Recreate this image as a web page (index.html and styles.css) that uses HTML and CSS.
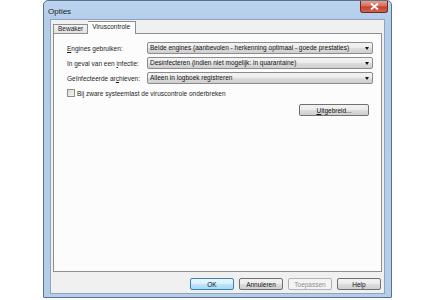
FILE: index.html
```html
<!DOCTYPE html>
<html>
<head>
<meta charset="utf-8">
<link rel="stylesheet" href="styles.css">
</head>
<body>
<div class="window">
  <div class="titlebar">
    <span class="title">Opties</span>
    <div class="close"><svg width="9" height="7" viewBox="0 0 9 7"><path d="M1 0.5 L8 6.5 M8 0.5 L1 6.5" stroke="#fff" stroke-width="1.8"/></svg></div>
  </div>
  <div class="client">
    <div class="tabs">
      <div class="tab">Bewaker</div>
      <div class="tab active">Viruscontrole</div>
    </div>
    <div class="panel">
      <div class="row">
        <span class="label"><u>E</u>ngines gebruiken:</span>
        <div class="select">Beide engines (aanbevolen - herkenning optimaal - goede prestaties)<span class="arrow"></span></div>
      </div>
      <div class="row">
        <span class="label">In geval van een <u>i</u>nfectie:</span>
        <div class="select">Desinfecteren (indien niet mogelijk: in quarantaine)<span class="arrow"></span></div>
      </div>
      <div class="row">
        <span class="label">Geïnfecteerde ar<u>c</u>hieven:</span>
        <div class="select">Alleen in logboek registreren<span class="arrow"></span></div>
      </div>
      <label class="check"><span class="box"></span><span class="check-text">Bi<u>j</u> zware systeemlast de viruscontrole onderbreken</span></label>
      <div class="adv-row"><div class="btn"><span><u>U</u>itgebreid...</span></div></div>
    </div>
    <div class="buttons">
      <div class="btn default">OK</div>
      <div class="btn">Annuleren</div>
      <div class="btn disabled">Toepassen</div>
      <div class="btn">Help</div>
    </div>
  </div>
</div>
</body>
</html>
```
FILE: styles.css
```css
* { box-sizing: border-box; }
body {
  margin: 0;
  background: #fff;
  font-family: "Liberation Sans", Arial, sans-serif;
  font-size: 6.5px;
  color: #1e1e1e;
}
.window {
  margin-left: 43px;
  width: 349px;
  height: 298px;
  border: 1px solid #59708e;
  border-radius: 5px 5px 1px 1px;
  background: linear-gradient(180deg, #bcd4ee 0px, #b3cdea 20px, #b5cde8 100%);
  display: flex;
  flex-direction: column;
}
.titlebar {
  height: 19px;
  display: flex;
  justify-content: space-between;
  align-items: flex-start;
  padding: 0 3px 0 4px;
}
.title {
  font-size: 8px;
  color: #1a1a1a;
  margin-top: 6px;
}
.close {
  width: 28px;
  height: 12px;
  border: 1px solid #6d2a24;
  border-top: none;
  border-radius: 0 0 3px 3px;
  background: linear-gradient(180deg, #e6a08f 0%, #d66d58 45%, #c6402a 55%, #d2664a 100%);
  display: flex;
  align-items: center;
  justify-content: center;
}
.client {
  flex: 1;
  margin: 0 6px 3px 6px;
  border: 1px solid #8ea5c2;
  background: #f0f0f0;
  padding: 1px 2px 3px 2px;
  display: flex;
  flex-direction: column;
}
.tabs {
  height: 12px;
  display: flex;
  align-items: flex-end;
}
.tab {
  height: 9px;
  padding: 0 4px;
  border: 1px solid #8c8e94;
  border-bottom: none;
  background: linear-gradient(180deg, #f3f3f3, #e2e2e2);
  line-height: 8px;
  color: #222;
}
.tab.active {
  background: #fcfcfc;
  border-left: none;
  margin-bottom: -1px;
  height: 13px;
  line-height: 10px;
  padding: 0 5px 0 4px;
  position: relative;
  z-index: 1;
}
.panel {
  height: 239px;
  border: 1px solid #8c8e94;
  background: #fcfcfc;
  padding: 8px 8px 0 13px;
  display: flex;
  flex-direction: column;
}
.row {
  display: flex;
  align-items: center;
  height: 12px;
  margin-bottom: 3px;
}
.label {
  width: 80px;
  flex: none;
  white-space: nowrap;
}
.select {
  flex: 1;
  height: 12px;
  border: 1px solid #8b8b8b;
  border-radius: 2px;
  background: linear-gradient(180deg, #f3f3f3 0%, #ebebeb 50%, #dddddd 51%, #cfcfcf 100%);
  padding-left: 2px;
  line-height: 10px;
  position: relative;
  white-space: nowrap;
  color: #111;
}
.arrow {
  position: absolute;
  right: 3px;
  top: 4px;
  width: 0;
  height: 0;
  border-left: 2.5px solid transparent;
  border-right: 2.5px solid transparent;
  border-top: 3px solid #111;
}
.check {
  display: flex;
  align-items: center;
  margin-top: 2px;
  height: 8px;
}
.check-text { white-space: nowrap; }
.box {
  width: 8px;
  height: 8px;
  border: 1px solid #8f8f8f;
  background: linear-gradient(135deg, #d9d9d9, #f6f6f6);
  margin-right: 2px;
  flex: none;
}
.adv-row {
  display: flex;
  justify-content: flex-end;
  margin-top: 7px;
  padding-right: 4px;
}
.btn {
  height: 12px;
  border: 1px solid #707070;
  border-radius: 2px;
  background: linear-gradient(180deg, #f2f2f2 0%, #ebebeb 50%, #dddddd 51%, #cfcfcf 100%);
  display: flex;
  align-items: center;
  justify-content: center;
  color: #111;
}
.adv-row .btn { width: 70px; }
.buttons {
  display: flex;
  justify-content: flex-end;
  gap: 5px;
  margin-top: 6px;
  padding-right: 1px;
}
.buttons .btn { width: 44px; }
.btn.default {
  border-color: #3c7fb1;
  background: linear-gradient(180deg, #eaf6fd 0%, #d9f0fc 50%, #bee6fd 51%, #a7d9f5 100%);
}
.btn.disabled {
  border-color: #adb2b5;
  background: #f4f4f4;
  color: #8d8d8d;
}
```
